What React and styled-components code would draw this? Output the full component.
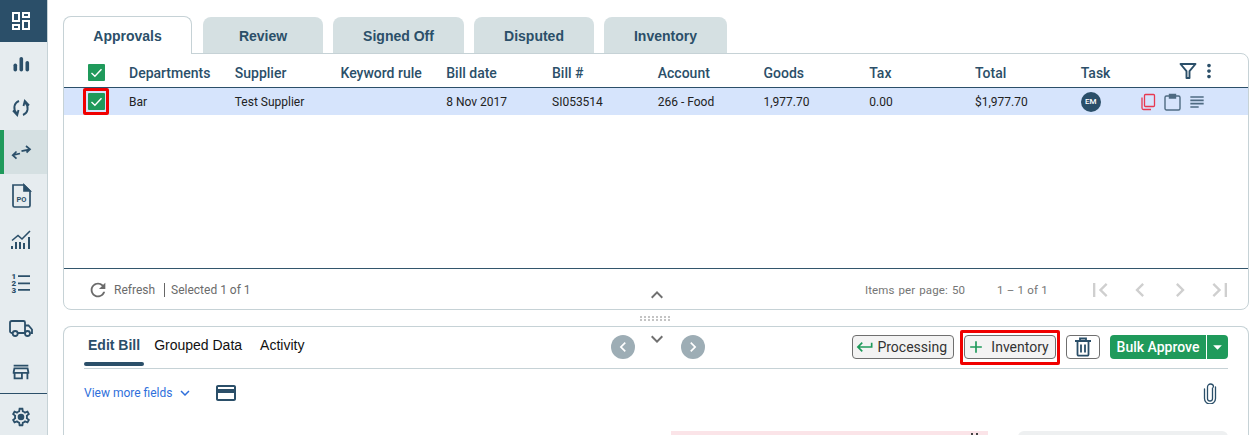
import React from "react";
import styled, { createGlobalStyle } from "styled-components";
import {
  MdOutlineDashboard, MdOutlineStore, MdOutlineCreditCard, MdMoreVert,
  MdSubject, MdFirstPage, MdLastPage, MdChevronLeft, MdChevronRight, MdKeyboardArrowUp,
  MdKeyboardArrowDown, MdRefresh, MdArrowDropDown, MdAdd, MdKeyboardReturn,
} from "react-icons/md";

const NAVY = "#2b4f69";
const LINE = "#c6d2d6";
const GREEN = "#1f9a5b";

const Global = createGlobalStyle`
  html, body { margin: 0; padding: 0; background: #fff; overflow: hidden; }
  * { box-sizing: border-box; }
  body { font-family: Roboto, "Liberation Sans", sans-serif; }
`;

const Page = styled.div`
  display: flex;
  width: 1256px;
  height: 435px;
  overflow: hidden;
`;

const Sidebar = styled.nav`
  flex: 0 0 48px;
  height: 435px;
  background: #e6ecef;
  border-right: 1px solid ${LINE};
  display: flex;
  flex-direction: column;
`;

const NavItem = styled.div`
  height: ${(p) => p.$h || 44}px;
  flex: none;
  display: flex;
  align-items: center;
  justify-content: center;
  padding-right: ${(p) => (p.$active ? 9 : 5)}px;
  color: ${(p) => (p.$home ? "#fff" : NAVY)};
  background: ${(p) => (p.$home ? NAVY : p.$active ? "#d5e0e2" : "transparent")};
  border-left: ${(p) => (p.$active ? `4px solid ${GREEN}` : "0")};
  border-top: ${(p) => (p.$divided ? `1px solid ${NAVY}` : "0")};
`;

const Main = styled.main`
  flex: 1;
  min-width: 0;
  padding: 16px 7px 0 15px;
  display: flex;
  flex-direction: column;
`;

const Tabs = styled.div`
  display: flex;
  align-items: flex-end;
  gap: 10px;
  height: 37px;
  position: relative;
  z-index: 1;
`;

const Tab = styled.div`
  width: ${(p) => p.$w}px;
  height: ${(p) => (p.$active ? 38 : 36)}px;
  margin-bottom: ${(p) => (p.$active ? -1 : 0)}px;
  margin-right: ${(p) => (p.$active ? 1 : 0)}px;
  display: flex;
  align-items: center;
  justify-content: center;
  padding-top: ${(p) => (p.$active ? 0 : 1)}px;
  border-radius: 8px 8px 0 0;
  font: bold 14px "Liberation Sans", sans-serif;
  color: ${NAVY};
  background: ${(p) => (p.$active ? "#fff" : "#d5e0e2")};
  border: ${(p) => (p.$active ? `1px solid ${LINE}` : "0")};
  border-bottom: 0;
`;

const TableCard = styled.section`
  height: 257px;
  flex: none;
  border: 1px solid ${LINE};
  border-radius: 0 8px 8px 8px;
  display: flex;
  flex-direction: column;
  position: relative;
`;

const Columns = styled.div`
  display: grid;
  grid-template-columns: 65px repeat(9, 105.75px) 56px 1fr;
  align-items: center;
`;

const HeaderRow = styled(Columns)`
  height: 34px;
  border-bottom: 1px solid ${NAVY};
  font: 500 14px Roboto, sans-serif;
  color: ${NAVY};
  padding-top: 4px;
`;

const DataRow = styled(Columns)`
  height: 27px;
  background: #d6e4fc;
  font: 400 12px Roboto, sans-serif;
  color: #222;
`;

const CheckCell = styled.div`
  display: flex;
  justify-content: flex-start;
  padding-left: 24px;
`;

const Flagged = styled.div`
  width: 26px;
  height: 27px;
  margin-left: -5px;
  border: 3px solid #f00000;
  border-radius: 2px;
  display: flex;
  align-items: center;
  justify-content: center;
`;

const Check = styled.span`
  width: 17px;
  height: 17px;
  background: ${GREEN};
  border-radius: 1px;
  display: flex;
  align-items: center;
  justify-content: center;
`;

const Avatar = styled.span`
  width: 20px;
  height: 20px;
  border-radius: 50%;
  background: ${NAVY};
  color: #fff;
  font: 500 8px Roboto, sans-serif;
  display: flex;
  align-items: center;
  justify-content: center;
`;

const RowActions = styled.div`
  display: flex;
  align-items: center;
  gap: 7px;
  padding-left: 2.5px;
  color: #4f6b82;
`;

const NotesIcon = styled(MdSubject)`
  margin-left: -1px;
`;

const HeadActions = styled.div`
  display: flex;
  align-items: center;
  justify-content: flex-start;
  padding-left: 42px;
  gap: 1px;
  color: ${NAVY};
  margin-top: -4px;
`;

const TableBody = styled.div`
  flex: 1;
`;

const Footer = styled.div`
  height: 41px;
  border-top: 1px solid #33566c;
  display: flex;
  align-items: center;
  padding: 1px 0 0 23px;
  font: 400 12px Roboto, sans-serif;
  color: #6b6b6b;
`;

const RefreshIcon = styled(MdRefresh)`
  margin-right: 5px;
  color: #6b6b6b;
`;

const SelectedNote = styled.span`
  margin-left: 9px;
  padding-left: 6px;
  border-left: 1px solid #666;
  line-height: 14px;
`;

const Pager = styled.div`
  margin-left: auto;
  display: flex;
  align-items: center;
  font-size: 11.5px;
  color: #757575;
`;

const PerPage = styled.span`
  margin-right: 32px;
  word-spacing: 1px;
  letter-spacing: 0.12px;
`;

const PageRange = styled.span`
  margin-right: 38px;
  letter-spacing: 0.2px;
`;

const PagerButtons = styled.div`
  display: flex;
  gap: 12px;
  color: #cfcfcf;
  padding-right: 14px;
`;

const Splitter = styled.div`
  height: 16px;
  flex: none;
  display: flex;
  align-items: center;
  justify-content: center;
  padding-right: 2px;
`;

const Grip = styled.div`
  width: 30px;
  height: 5px;
  background-image: radial-gradient(circle at 1px 1px, #c4c4c4 1.1px, transparent 1.2px);
  background-size: 4px 3px;
`;

const PeekChevron = styled.span`
  position: absolute;
  left: ${(p) => p.$x}px;
  top: ${(p) => p.$y}px;
  color: #707070;
  display: flex;
`;

const EditCard = styled.section`
  flex: 1;
  border: 1px solid ${LINE};
  border-bottom: 0;
  border-radius: 8px 8px 0 0;
  padding: 0 20px;
  position: relative;
  display: flex;
  flex-direction: column;
  min-height: 0;
`;

const EditBar = styled.div`
  height: 42px;
  flex: none;
  border-bottom: 1px solid ${LINE};
  display: flex;
  align-items: center;
  position: relative;
`;

const SubTab = styled.div`
  font: ${(p) => (p.$active ? "bold" : "400")} 14px "Liberation Sans", sans-serif;
  color: ${(p) => (p.$active ? NAVY : "#111")};
  margin-left: ${(p) => p.$ml}px;
  position: relative;
  top: -3px;
  &::after {
    content: "";
    display: ${(p) => (p.$active ? "block" : "none")};
    position: absolute;
    left: -4px;
    right: -4px;
    bottom: -13px;
    height: 4px;
    background: ${NAVY};
    border-radius: 2px;
  }
`;

const RoundButton = styled.span`
  position: absolute;
  left: ${(p) => p.$x}px;
  top: 8px;
  width: 24px;
  height: 24px;
  border-radius: 50%;
  background: #9dadb5;
  color: #fff;
  display: flex;
  align-items: center;
  justify-content: center;
`;

const EditActions = styled.div`
  margin-left: auto;
  margin-top: -1px;
  display: flex;
  align-items: center;
`;

const OutlineButton = styled.button`
  height: 24px;
  padding: 0 ${(p) => p.$pr ?? 6}px 0 ${(p) => p.$pl ?? 2}px;
  border: 1px solid #6f6f6f;
  border-radius: 4px;
  background: ${(p) => (p.$plain ? "#fff" : "#f3f3f3")};
  font: 400 14px Roboto, sans-serif;
  color: #333;
  display: flex;
  align-items: center;
  gap: ${(p) => p.$gap ?? 2}px;
`;

const RedFrame = styled.div`
  width: 100px;
  height: 35px;
  margin: 0 6px;
  border: 3px solid #f00000;
  border-radius: 2px;
  display: flex;
  align-items: center;
  justify-content: center;
`;

const SplitApprove = styled.div`
  margin-left: 10px;
  height: 24px;
  display: flex;
  border-radius: 4px;
  overflow: hidden;
  color: #fff;
  background: ${GREEN};
  font: 500 14px Roboto, sans-serif;
`;

const ApproveLabel = styled.span`
  width: 97px;
  display: flex;
  align-items: center;
  justify-content: center;
  border-right: 1px solid #fff;
`;

const ApproveCaret = styled.span`
  width: 21px;
  display: flex;
  align-items: center;
  justify-content: center;
`;

const FieldsRow = styled.div`
  display: flex;
  align-items: center;
  height: 48px;
  color: #2f6fdb;
  font: 400 12px Roboto, sans-serif;
`;

const FieldsChevron = styled(MdKeyboardArrowDown)`
  margin-left: 4px;
`;

const CardIcon = styled(MdOutlineCreditCard)`
  color: ${NAVY};
  margin-left: 20px;
`;

const ClipSlot = styled.span`
  margin-left: auto;
  margin-right: 11px;
  display: flex;
`;

const Strips = styled.div`
  position: absolute;
  top: 104px;
  left: 0;
  right: 20px;
  display: flex;
  height: 10px;
`;

const PinkStrip = styled.div`
  margin-left: 607px;
  width: 317px;
  background: #fbe4e8;
  position: relative;
  &::after {
    content: "";
    position: absolute;
    left: 300px;
    top: 2px;
    width: 2px;
    height: 2px;
    background: #444;
    box-shadow: 5px 0 0 #444;
  }
`;

const GreyStrip = styled.div`
  margin-left: 30px;
  flex: 1;
  background: #eef0f1;
  border-radius: 6px 6px 0 0;
`;

const tick = (
  <svg width="13" height="13" viewBox="0 0 13 13" fill="none" stroke="#fff" strokeWidth="1.4">
    <path d="M1.5 7l3.4 3.2 6.6-7" />
  </svg>
);

const BarsIcon = () => (
  <svg width="24" height="24" viewBox="0 0 24 24" fill="currentColor">
    <rect x="4.5" y="11.5" width="3.6" height="8" rx="1.8" />
    <rect x="10.5" y="5" width="3.6" height="14.5" rx="1.8" />
    <rect x="16.5" y="9" width="3.6" height="10.5" rx="1.8" />
  </svg>
);

const SyncIcon = () => (
  <svg width="24" height="24" viewBox="0 0 24 24" fill="none" stroke="currentColor" strokeWidth="1.9">
    <path d="M10 5C5 7 3.5 13 8 18" />
    <path d="M4 14.5L8.2 19 9.5 14" />
    <path d="M14 19c5-2 6.5-8 2-13" />
    <path d="M20 9.5L15.8 5 14.5 10" />
  </svg>
);

const SwapIcon = () => (
  <svg width="24" height="24" viewBox="0 0 24 24" fill="none" stroke="currentColor" strokeWidth="1.7">
    <path d="M12.5 11.2L21 9.3M17 6l4 3.3-3.5 3.2" />
    <path d="M3.7 15.2L11 13.5M7.5 11.5L3.7 15.2l3.8 3.5" />
  </svg>
);

const PoIcon = () => (
  <svg width="24" height="26" viewBox="0 0 24 26" fill="none" stroke="currentColor" strokeWidth="1.7">
    <path d="M4 2h11l6 6v14.5a1.5 1.5 0 0 1-1.5 1.5H5.5A1.5 1.5 0 0 1 4 22.5z" />
    <path d="M15 2l6 6h-6z" fill="currentColor" />
    <text x="12.5" y="18.5" fontSize="7.5" fontFamily="Roboto" fontWeight="700" fill="currentColor" stroke="none" textAnchor="middle">PO</text>
  </svg>
);

const TrendIcon = () => (
  <svg width="24" height="24" viewBox="0 0 24 24" fill="none" stroke="currentColor">
    <path d="M3 12.5l6-5 4 3.5 8-8" strokeWidth="1.6" />
    <path d="M3 21v-3M7 21v-7M11 21v-7M15 21v-6M20 21V9" strokeWidth="2" />
  </svg>
);

const NumberedIcon = () => (
  <svg width="24" height="24" viewBox="0 0 24 24" fill="currentColor">
    <path d="M9 3.2h12V5H9zM9 10.5h12v1.8H9zM9 17h12v1.8H9z" />
    <text x="2.5" y="7" fontSize="8" fontFamily="Roboto" fontWeight="900">1</text>
    <text x="2.5" y="14" fontSize="8" fontFamily="Roboto" fontWeight="900">2</text>
    <text x="2.5" y="21" fontSize="8" fontFamily="Roboto" fontWeight="900">3</text>
  </svg>
);

const TruckIcon = () => (
  <svg width="24" height="24" viewBox="0 0 24 24" fill="none" stroke="currentColor" strokeWidth="1.8">
    <path d="M3.5 17H2.8A1.8 1.8 0 0 1 1 15.2V6.800A1.8 1.8 0 0 1 2.8 5H14.5A1.5 1.5 0 0 1 16 6.5V17H9" />
    <path d="M16 9.5h3.5l3.5 4V17h-1.500" />
    <circle cx="6.2" cy="17.5" r="2.5" />
    <circle cx="18.5" cy="17.5" r="2.5" />
  </svg>
);

const GearIcon = () => (
  <svg width="22" height="22" viewBox="0 0 24 24" fill="currentColor">
    <path d="M19.43 12.98c.04-.32.07-.64.07-.98 0-.34-.03-.66-.07-.98l2.11-1.65c.19-.15.24-.42.12-.64l-2-3.46c-.09-.16-.26-.25-.44-.25-.06 0-.12.01-.17.03l-2.49 1c-.52-.4-1.08-.73-1.69-.98l-.38-2.65C14.46 2.18 14.25 2 14 2h-4c-.25 0-.46.18-.49.42l-.38 2.65c-.61.25-1.17.59-1.69.98l-2.49-1c-.06-.02-.12-.03-.18-.03-.17 0-.34.09-.43.25l-2 3.46c-.13.22-.07.49.12.64l2.11 1.65c-.04.32-.07.65-.07.98 0 .33.03.66.07.98l-2.11 1.65c-.19.15-.24.42-.12.64l2 3.46c.09.16.26.25.44.25.06 0 .12-.01.17-.03l2.49-1c.52.4 1.08.73 1.69.98l.38 2.65c.03.24.24.42.49.42h4c.25 0 .46-.18.49-.42l.38-2.65c.61-.25 1.17-.59 1.69-.98l2.49 1c.06.02.12.03.18.03.17 0 .34-.09.43-.25l2-3.46c.12-.22.07-.49-.12-.64l-2.11-1.65zm-1.98-1.71c.04.31.05.52.05.73 0 .21-.02.43-.05.73l-.14 1.13.89.7 1.08.84-.7 1.21-1.27-.51-1.04-.42-.9.68c-.43.32-.84.56-1.25.73l-1.06.43-.16 1.13-.2 1.35h-1.4l-.19-1.35-.16-1.13-1.06-.43c-.43-.18-.83-.41-1.23-.71l-.91-.7-1.06.43-1.27.51-.7-1.21 1.08-.84.89-.7-.14-1.13c-.03-.31-.05-.54-.05-.74s.02-.43.05-.73l.14-1.13-.89-.7-1.08-.84.7-1.21 1.27.51 1.04.42.9-.68c.43-.32.84-.56 1.25-.73l1.06-.43.16-1.13.2-1.35h1.39l.19 1.35.16 1.13 1.06.43c.43.18.83.41 1.23.71l.91.7 1.06-.43 1.27-.51.7 1.21-1.07.85-.89.7.14 1.13z" />
    <circle cx="12" cy="12" r="3.6" />
  </svg>
);

const FunnelIcon = () => (
  <svg width="18" height="18" viewBox="0 0 18 18" fill="none" stroke="currentColor" strokeWidth="1.9" strokeLinejoin="round">
    <path d="M1.5 2h15l-6 7.2V16h-3V9.2z" />
  </svg>
);

const CopyIcon = () => (
  <svg width="18" height="18" viewBox="0 0 18 18" fill="none" stroke="#e8384f" strokeWidth="1.3">
    <rect x="5.5" y="1.5" width="10" height="12" rx="1" />
    <path d="M3 4.5V15a1.5 1.5 0 0 0 1.5 1.5H12" />
  </svg>
);

const BoardIcon = () => (
  <svg width="17" height="18" viewBox="0 0 17 18" fill="none" stroke="currentColor" strokeWidth="1.4">
    <rect x="1" y="3" width="15" height="14" rx="1.5" />
    <path d="M5.5 1.500h6V5h-6z" fill="currentColor" />
  </svg>
);

const TrashIcon = () => (
  <svg width="18" height="20" viewBox="0 0 18 20" fill="none" stroke={NAVY} strokeWidth="1.8">
    <path d="M1 4h16M6 4V1.5h6V4" />
    <path d="M3.5 4v13.5a1.2 1.2 0 0 0 1.2 1.2h8.6a1.2 1.2 0 0 0 1.2-1.2V4" />
    <path d="M7 7.5v8M11 7.5v8" />
  </svg>
);

const ClipIcon = () => (
  <svg width="14" height="21" viewBox="0 0 14 21" fill="none" stroke={NAVY} strokeWidth="1.3" strokeLinecap="round">
    <path d="M9.5 5v10.5a2.5 2.5 0 0 1-5 0V4a3 3 0 0 1 6 0" />
    <path d="M1.5 6v9.5a5.5 5.5 0 0 0 11 0V4" />
  </svg>
);

const tabs = [["Approvals", 129, true], ["Review", 120], ["Signed Off", 131], ["Disputed", 120], ["Inventory", 123]];
const headers = ["Departments", "Supplier", "Keyword rule", "Bill date", "Bill #", "Account", "Goods", "Tax", "Total", "Task"];
const row = ["Bar", "Test Supplier", "", "8 Nov 2017", "SI053514", "266 - Food", "1,977.70", "0.00", "$1,977.70"];

export default function App() {
  return (
    <Page>
      <Global />
      <Sidebar>
        <NavItem $home $h={42}><MdOutlineDashboard size={24} /></NavItem>
        <NavItem><BarsIcon /></NavItem>
        <NavItem><SyncIcon /></NavItem>
        <NavItem $active><SwapIcon /></NavItem>
        <NavItem><PoIcon /></NavItem>
        <NavItem><TrendIcon /></NavItem>
        <NavItem><NumberedIcon /></NavItem>
        <NavItem><TruckIcon /></NavItem>
        <NavItem $h={43}><MdOutlineStore size={22} /></NavItem>
        <NavItem $divided $h={46}><GearIcon /></NavItem>
      </Sidebar>
      <Main>
        <Tabs>
          {tabs.map(([label, w, active]) => (
            <Tab key={label} $w={w} $active={active}>{label}</Tab>
          ))}
        </Tabs>
        <TableCard>
          <HeaderRow>
            <CheckCell><Check>{tick}</Check></CheckCell>
            {headers.map((h) => <span key={h}>{h}</span>)}
            <HeadActions>
              <FunnelIcon />
              <MdMoreVert size={22} />
            </HeadActions>
          </HeaderRow>
          <DataRow>
            <CheckCell><Flagged><Check>{tick}</Check></Flagged></CheckCell>
            {row.map((c, i) => <span key={i}>{c}</span>)}
            <span><Avatar>EM</Avatar></span>
            <RowActions>
              <CopyIcon />
              <BoardIcon />
              <NotesIcon size={20} />
            </RowActions>
          </DataRow>
          <TableBody />
          <Footer>
            <RefreshIcon size={22} />
            Refresh
            <SelectedNote>Selected 1 of 1</SelectedNote>
            <Pager>
              <PerPage>Items per page: 50</PerPage>
              <PageRange>1 – 1 of 1</PageRange>
              <PagerButtons>
                <MdFirstPage size={28} />
                <MdChevronLeft size={28} />
                <MdChevronRight size={28} />
                <MdLastPage size={28} />
              </PagerButtons>
            </Pager>
          </Footer>
          <PeekChevron $x={581} $y={229}><MdKeyboardArrowUp size={24} /></PeekChevron>
        </TableCard>
        <Splitter><Grip /></Splitter>
        <EditCard>
          <EditBar>
            <SubTab $active $ml={4}>Edit Bill</SubTab>
            <SubTab $ml={14}>Grouped Data</SubTab>
            <SubTab $ml={18}>Activity</SubTab>
            <RoundButton $x={527}><MdChevronLeft size={20} /></RoundButton>
            <PeekChevron $x={561} $y={0}><MdKeyboardArrowDown size={24} /></PeekChevron>
            <RoundButton $x={597}><MdChevronRight size={20} /></RoundButton>
            <EditActions>
              <OutlineButton><MdKeyboardReturn size={20} color={GREEN} />Processing</OutlineButton>
              <RedFrame>
                <OutlineButton $pl={1} $pr={6} $gap={5}><MdAdd size={20} color={GREEN} />Inventory</OutlineButton>
              </RedFrame>
              <OutlineButton $plain $pl={7} $pr={7}><TrashIcon /></OutlineButton>
              <SplitApprove>
                <ApproveLabel>Bulk Approve</ApproveLabel>
                <ApproveCaret><MdArrowDropDown size={30} /></ApproveCaret>
              </SplitApprove>
            </EditActions>
          </EditBar>
          <FieldsRow>
            View more fields
            <FieldsChevron size={18} />
            <CardIcon size={24} />
            <ClipSlot><ClipIcon /></ClipSlot>
          </FieldsRow>
          <Strips>
            <PinkStrip />
            <GreyStrip />
          </Strips>
        </EditCard>
      </Main>
    </Page>
  );
}
